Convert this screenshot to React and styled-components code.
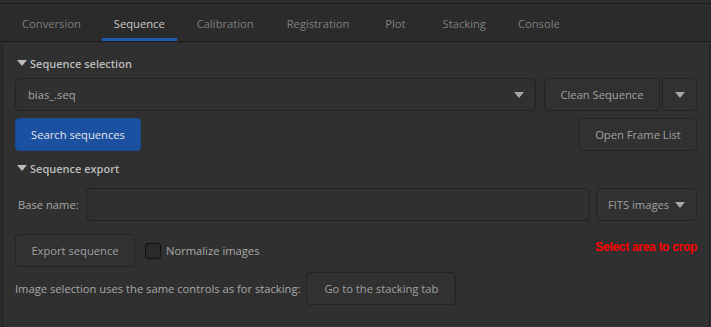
import styled, { createGlobalStyle } from 'styled-components'

const Global = createGlobalStyle`
  html, body { margin: 0; padding: 0; background: #2c2c2c; }
  body { font-family: "Open Sans", "Noto Sans", sans-serif; }
`

const Window = styled.div`
  width: 711px;
  height: 327px;
  display: flex;
  flex-direction: column;
  background: #2c2c2c;
  overflow: hidden;
`

const TopStrip = styled.div`
  height: 3px;
  background: #2c2c2c;
  border-bottom: 1px solid #1e1e1e;
`

const TabBar = styled.div`
  height: 37px;
  display: flex;
  align-items: stretch;
  padding-left: 10px;
  background: #2b2b2b;
  border-bottom: 1px solid #1e1e1e;
`

const Tab = styled.div`
  display: flex;
  align-items: center;
  padding: 4px 12px 0;
  margin-right: ${p => p.$gap || 8}px;
  font-size: 11.2px;
  color: ${p => (p.$active ? '#c8c8c8' : '#7f7f7f')};
  border-bottom: 3px solid ${p => (p.$active ? '#1e5bb0' : 'transparent')};
  box-sizing: border-box;
`

const Panel = styled.div`
  flex: 1;
  margin-left: 2px;
  margin-right: 1px;
  margin-top: 1px;
  background: #303030;
  border-left: 1px solid #232323;
  border-right: 1px solid #232323;
  padding: 10px 12px 0 12px;
  display: flex;
  flex-direction: column;
`

const SectionHeader = styled.div`
  display: flex;
  align-items: center;
  gap: 3px;
  font-size: 11px;
  font-weight: 600;
  color: #bdbdbd;
  height: 20px;
  margin-left: 2px;
  margin-top: ${p => p.$top || 0}px;
`

const Caret = styled.span`
  width: 0;
  height: 0;
  border-left: 5px solid transparent;
  border-right: 5px solid transparent;
  border-top: 6px solid ${p => p.$color || '#bdbdbd'};
`

const Row = styled.div`
  display: flex;
  align-items: center;
  gap: ${p => p.$gap || 8}px;
  margin-top: ${p => p.$top || 0}px;
`

const Combo = styled.div`
  flex: 1;
  height: 33px;
  box-sizing: border-box;
  display: flex;
  align-items: center;
  justify-content: space-between;
  padding: 0 11px 0 12px;
  border: 1px solid #222;
  border-radius: 4px;
  background: #303030;
  font-size: 11.2px;
  color: #a6a6a6;
`

const Button = styled.div`
  height: 33px;
  box-sizing: border-box;
  display: flex;
  align-items: center;
  justify-content: center;
  gap: 6px;
  padding: 0 ${p => p.$pad ?? 15}px;
  width: ${p => (p.$width ? p.$width + 'px' : 'auto')};
  border: 1px solid ${p => (p.$primary ? '#184a8e' : '#232323')};
  border-radius: 4px;
  background: ${p => (p.$primary ? '#1b51a0' : '#313131')};
  color: ${p => (p.$primary ? '#e2e6ee' : '#a0a0a0')};
  font-size: 11.2px;
  white-space: nowrap;
`

const ButtonGroup = styled.div`
  display: flex;
  gap: 2px;
`

const Spacer = styled.div`
  flex: 1;
`

const Label = styled.span`
  font-size: 11.2px;
  color: #a8a8a8;
  white-space: nowrap;
  margin-left: ${p => p.$left || 0}px;
  margin-right: ${p => p.$right || 0}px;
`

const TextInput = styled.div`
  flex: 1;
  height: 33px;
  box-sizing: border-box;
  border: 1px solid #222;
  border-radius: 4px;
  background: #303030;
`

const CheckBox = styled.span`
  width: 14px;
  height: 14px;
  border: 1px solid #111;
  border-radius: 3px;
  background: #2a2a2a;
`

const CheckLabel = styled.label`
  display: flex;
  align-items: center;
  gap: 5px;
  font-size: 11.2px;
  color: #a8a8a8;
`

const Warning = styled.span`
  font-family: "Liberation Sans", Arial, sans-serif;
  font-size: 12px;
  font-weight: bold;
  color: #ff0000;
  letter-spacing: -0.3px;
  margin-bottom: 8px;
`

const tabs = [
  ['Conversion', 9],
  ['Sequence', 8],
  ['Calibration', 9],
  ['Registration', 12],
  ['Plot', 13],
  ['Stacking', 8],
  ['Console', 8],
]

export default function App() {
  return (
    <Window>
      <Global />
      <TopStrip />
      <TabBar>
        {tabs.map(([t, g]) => (
          <Tab key={t} $gap={g} $active={t === 'Sequence'}>{t}</Tab>
        ))}
      </TabBar>
      <Panel>
        <SectionHeader>
          <Caret />
          Sequence selection
        </SectionHeader>
        <Row $top={5}>
          <Combo>
            bias_.seq
            <Caret $color="#a8a8a8" />
          </Combo>
          <ButtonGroup>
            <Button $width={116}>Clean Sequence</Button>
            <Button $width={35} $pad={0}><Caret $color="#a8a8a8" /></Button>
          </ButtonGroup>
        </Row>
        <Row $top={7}>
          <Button $primary $width={126}>Search sequences</Button>
          <Spacer />
          <Button $width={118}>Open Frame List</Button>
        </Row>
        <SectionHeader $top={7}>
          <Caret />
          Sequence export
        </SectionHeader>
        <Row $top={10} $gap={6}>
          <Label $left={3} $right={1}>Base name:</Label>
          <TextInput />
          <Button $width={101}>FITS images <Caret $color="#a8a8a8" /></Button>
        </Row>
        <Row $top={13} $gap={10}>
          <Button $width={120}>Export sequence</Button>
          <CheckLabel>
            <CheckBox />
            Normalize images
          </CheckLabel>
          <Spacer />
          <Warning>Select area to crop</Warning>
        </Row>
        <Row $top={5} $gap={6}>
          <Label>Image selection uses the same controls as for stacking:</Label>
          <Button $width={150}>Go to the stacking tab</Button>
        </Row>
      </Panel>
    </Window>
  )
}
